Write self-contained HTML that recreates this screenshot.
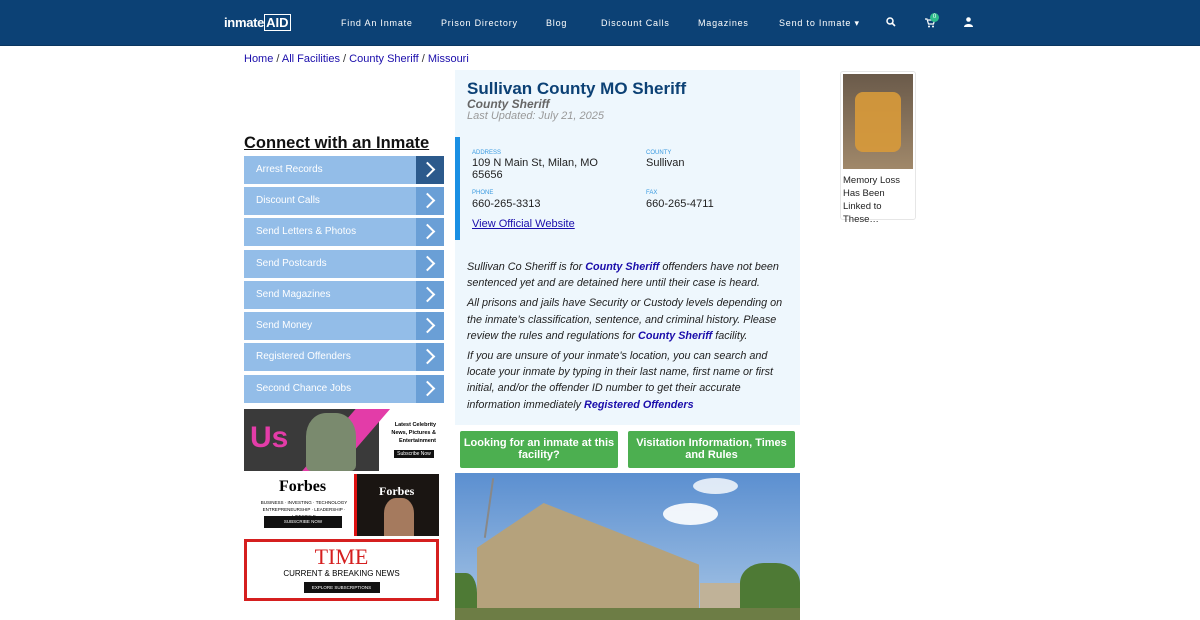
<!DOCTYPE html>
<html><head><meta charset="utf-8"><style>
*{margin:0;padding:0;box-sizing:border-box}
body{width:1200px;height:620px;overflow:hidden;background:#fff;font-family:"Liberation Sans",sans-serif;position:relative}
.nav{position:absolute;left:0;top:0;width:1200px;height:46px;background:#0c4175;border-bottom:1px solid #0a3660}
.nav span{position:absolute;top:18px;color:#fff;font-size:9px;letter-spacing:.8px}
.abs{position:absolute}
a{color:#1a0dab}
.crumb{left:244px;top:53px;font-size:11px;color:#333}
.crumb a{color:#1a0dab;text-decoration:none}
.menu{left:244px;width:200px;height:28px;background:#93bde8;color:#fff;font-size:10px;line-height:28px;padding-left:12px}
.menu i{position:absolute;right:0;top:0;width:28px;height:28px;background:#6a9fd6}
.menu i:after{content:"";position:absolute;left:6px;top:8px;width:9px;height:9px;border-right:2px solid #fff;border-top:2px solid #fff;transform:rotate(45deg)}
.lbl{font-size:6px;color:#3a9ae0}
.val{font-size:11px;color:#222}
.desc{font-size:10.8px;font-style:italic;color:#222;line-height:16.2px}
.desc b{color:#1a0dab}
.btn{top:431px;height:37px;background:#4caf50;color:#fff;font-weight:bold;font-size:11px;text-align:center;line-height:12px;padding-top:6px;border-radius:2px}
</style></head><body>
<div class="nav">
<div class="abs" style="left:224px;top:15px;color:#fff;font-weight:bold;font-size:13px;letter-spacing:-.3px">inmate<span style="position:static;font-size:13px;border:1px solid #fff;padding:0 1px;letter-spacing:0;top:auto">AID</span></div>
<span style="left:341px">Find An Inmate</span>
<span style="left:441px">Prison Directory</span>
<span style="left:546px">Blog</span>
<span style="left:601px">Discount Calls</span>
<span style="left:698px">Magazines</span>
<span style="left:779px">Send to Inmate ▾</span>
<svg class="abs" style="left:886px;top:17px" width="10" height="10" viewBox="0 0 10 10"><circle cx="4" cy="4" r="3" stroke="#fff" stroke-width="1.5" fill="none"/><path d="M6 6l3 3" stroke="#fff" stroke-width="1.6"/></svg>
<svg class="abs" style="left:925px;top:18px" width="10" height="10" viewBox="0 0 10 10"><path d="M0 1h2l1.5 5h5l1-4H3" stroke="#fff" stroke-width="1.2" fill="none"/><circle cx="4" cy="8.5" r="1" fill="#fff"/><circle cx="8" cy="8.5" r="1" fill="#fff"/></svg>
<div class="abs" style="left:930px;top:13px;width:9px;height:9px;border-radius:50%;background:#2ebd8c;color:#fff;font-size:6px;text-align:center;line-height:9px">0</div>
<svg class="abs" style="left:964px;top:17px" width="9" height="10" viewBox="0 0 9 10"><circle cx="4.5" cy="2.5" r="2.3" fill="#fff"/><path d="M0 10c0-4 9-4 9 0z" fill="#fff"/></svg>
</div>
<div class="abs crumb"><a>Home</a> / <a>All Facilities</a> / <a>County Sheriff</a> / <a>Missouri</a></div>
<div class="abs" style="left:244px;top:134px;font-size:16.5px;font-weight:bold;text-decoration:underline;color:#111">Connect with an Inmate</div>
<div class="abs menu" style="top:156px">Arrest Records<i style="background:#2c5a8c"></i></div>
<div class="abs menu" style="top:187px">Discount Calls<i></i></div>
<div class="abs menu" style="top:218px">Send Letters &amp; Photos<i></i></div>
<div class="abs menu" style="top:250px">Send Postcards<i></i></div>
<div class="abs menu" style="top:281px">Send Magazines<i></i></div>
<div class="abs menu" style="top:312px">Send Money<i></i></div>
<div class="abs menu" style="top:343px">Registered Offenders<i></i></div>
<div class="abs menu" style="top:375px">Second Chance Jobs<i></i></div>
<!-- Us ad -->
<div class="abs" style="left:244px;top:409px;width:195px;height:62px;background:#fff;overflow:hidden">
<div class="abs" style="left:0;top:0;width:135px;height:62px;background:#3a3a3a"></div>
<div class="abs" style="left:38px;top:-8px;width:115px;height:80px;background:#e33ca8;clip-path:polygon(70% 0,100% 0,40% 100%,10% 100%)"></div>
<div class="abs" style="left:62px;top:4px;width:50px;height:58px;background:#7a8a6e;border-radius:40% 40% 10% 10%"></div>
<div class="abs" style="left:6px;top:12px;font-size:30px;font-weight:bold;color:#e33ca8">Us</div>
<div class="abs" style="left:144px;top:12px;width:48px;font-size:5.5px;font-weight:bold;text-align:right;line-height:8px">Latest Celebrity News, Pictures &amp; Entertainment</div>
<div class="abs" style="left:150px;top:41px;width:40px;height:8px;background:#111;color:#fff;font-size:5px;text-align:center;line-height:8px">Subscribe Now</div>
</div>
<!-- Forbes -->
<div class="abs" style="left:244px;top:474px;width:195px;height:62px;background:#fff;overflow:hidden">
<div class="abs" style="left:35px;top:4px;font-family:'Liberation Serif',serif;font-weight:bold;font-size:16px">Forbes</div>
<div class="abs" style="left:10px;top:25px;width:100px;font-size:4.5px;text-align:center;line-height:7px">BUSINESS · INVESTING · TECHNOLOGY<br>ENTREPRENEURSHIP · LEADERSHIP · LIFESTYLE</div>
<div class="abs" style="left:20px;top:42px;width:78px;height:12px;background:#111;color:#fff;font-size:4.5px;text-align:center;line-height:12px">SUBSCRIBE NOW</div>
<div class="abs" style="left:110px;top:0;width:85px;height:62px;background:#1a1512;border-left:3px solid #d11"></div>
<div class="abs" style="left:135px;top:10px;color:#fff;font-family:'Liberation Serif',serif;font-weight:bold;font-size:12px">Forbes</div>
<div class="abs" style="left:140px;top:24px;width:30px;height:38px;background:#a57a5e;border-radius:40% 40% 0 0"></div>
</div>
<!-- TIME -->
<div class="abs" style="left:244px;top:539px;width:195px;height:62px;border:3px solid #d51f1f;background:#fff;text-align:center">
<div style="font-family:'Liberation Serif',serif;color:#d51f1f;font-size:22px;line-height:24px;margin-top:3px">TIME</div>
<div style="font-size:8px;line-height:10px">CURRENT &amp; BREAKING NEWS</div>
<div style="width:76px;height:11px;background:#111;color:#fff;font-size:4.5px;line-height:11px;margin:3px auto 0">EXPLORE SUBSCRIPTIONS</div>
</div>
<!-- main card -->
<div class="abs" style="left:455px;top:70px;width:345px;height:355px;background:#eef7fd"></div>
<div class="abs" style="left:467px;top:79px;font-size:17px;font-weight:bold;color:#0c4175">Sullivan County MO Sheriff</div>
<div class="abs" style="left:467px;top:97px;font-size:12px;font-weight:bold;font-style:italic;color:#666">County Sheriff</div>
<div class="abs" style="left:467px;top:110px;font-size:11px;font-style:italic;color:#999">Last Updated: July 21, 2025</div>
<div class="abs" style="left:455px;top:137px;width:5px;height:103px;background:#1a8fe3"></div>
<div class="abs lbl" style="left:472px;top:150px">ADDRESS</div>
<div class="abs val" style="left:472px;top:157px;line-height:12px">109 N Main St, Milan, MO<br>65656</div>
<div class="abs lbl" style="left:646px;top:150px">COUNTY</div>
<div class="abs val" style="left:646px;top:157px">Sullivan</div>
<div class="abs lbl" style="left:472px;top:190px">PHONE</div>
<div class="abs val" style="left:472px;top:198px">660-265-3313</div>
<div class="abs lbl" style="left:646px;top:190px">FAX</div>
<div class="abs val" style="left:646px;top:198px">660-265-4711</div>
<div class="abs" style="left:472px;top:218px;font-size:11px;text-decoration:underline;color:#1a0dab">View Official Website</div>
<div class="abs desc" style="left:467px;top:259px;width:322px">
<p>Sullivan Co Sheriff is for <b>County Sheriff</b> offenders have not been sentenced yet and are detained here until their case is heard.</p>
<p style="margin-top:4px">All prisons and jails have Security or Custody levels depending on the inmate’s classification, sentence, and criminal history. Please review the rules and regulations for <b>County Sheriff</b> facility.</p>
<p style="margin-top:4px">If you are unsure of your inmate's location, you can search and locate your inmate by typing in their last name, first name or first initial, and/or the offender ID number to get their accurate information immediately <b>Registered Offenders</b></p>
</div>
<div class="abs btn" style="left:460px;width:158px">Looking for an inmate at this facility?</div>
<div class="abs btn" style="left:628px;width:167px">Visitation Information, Times and Rules</div>
<!-- photo -->
<div class="abs" style="left:455px;top:473px;width:345px;height:147px;overflow:hidden;background:linear-gradient(#5b8fd0,#a8c6e6)">
<div class="abs" style="left:208px;top:30px;width:55px;height:22px;border-radius:50%;background:#fff;opacity:.9"></div>
<div class="abs" style="left:238px;top:5px;width:45px;height:16px;border-radius:50%;background:#fff;opacity:.8"></div>
<div class="abs" style="left:33px;top:5px;width:2px;height:60px;background:#888;transform:rotate(8deg)"></div>
<div class="abs" style="left:22px;top:30px;width:222px;height:112px;background:#b5a27c;clip-path:polygon(0 40%,30% 0,62% 25%,100% 55%,100% 100%,0 100%)"></div>
<div class="abs" style="left:245px;top:110px;width:60px;height:30px;background:#c0b298"></div>
<div class="abs" style="left:285px;top:90px;width:60px;height:50px;background:#4e7a35;border-radius:40% 40% 0 0"></div>
<div class="abs" style="left:0;top:100px;width:22px;height:40px;background:#4e7a35;border-radius:0 50% 0 0"></div>
<div class="abs" style="left:0;top:135px;width:345px;height:12px;background:#6d7d45"></div>
</div>
<!-- right ad -->
<div class="abs" style="left:840px;top:71px;width:76px;height:149px;border:1px solid #e6e6e6;border-radius:3px;background:#fff">
<div class="abs" style="left:2px;top:2px;width:70px;height:95px;background:linear-gradient(#6a5a4a,#a0886a)"></div>
<div class="abs" style="left:14px;top:20px;width:46px;height:60px;border-radius:8px;background:#d89a3a;opacity:.9"></div>
<div class="abs" style="left:2px;top:102px;font-size:9.5px;line-height:13px;color:#222;width:68px">Memory Loss Has Been Linked to These…</div>
</div>
</body></html>
